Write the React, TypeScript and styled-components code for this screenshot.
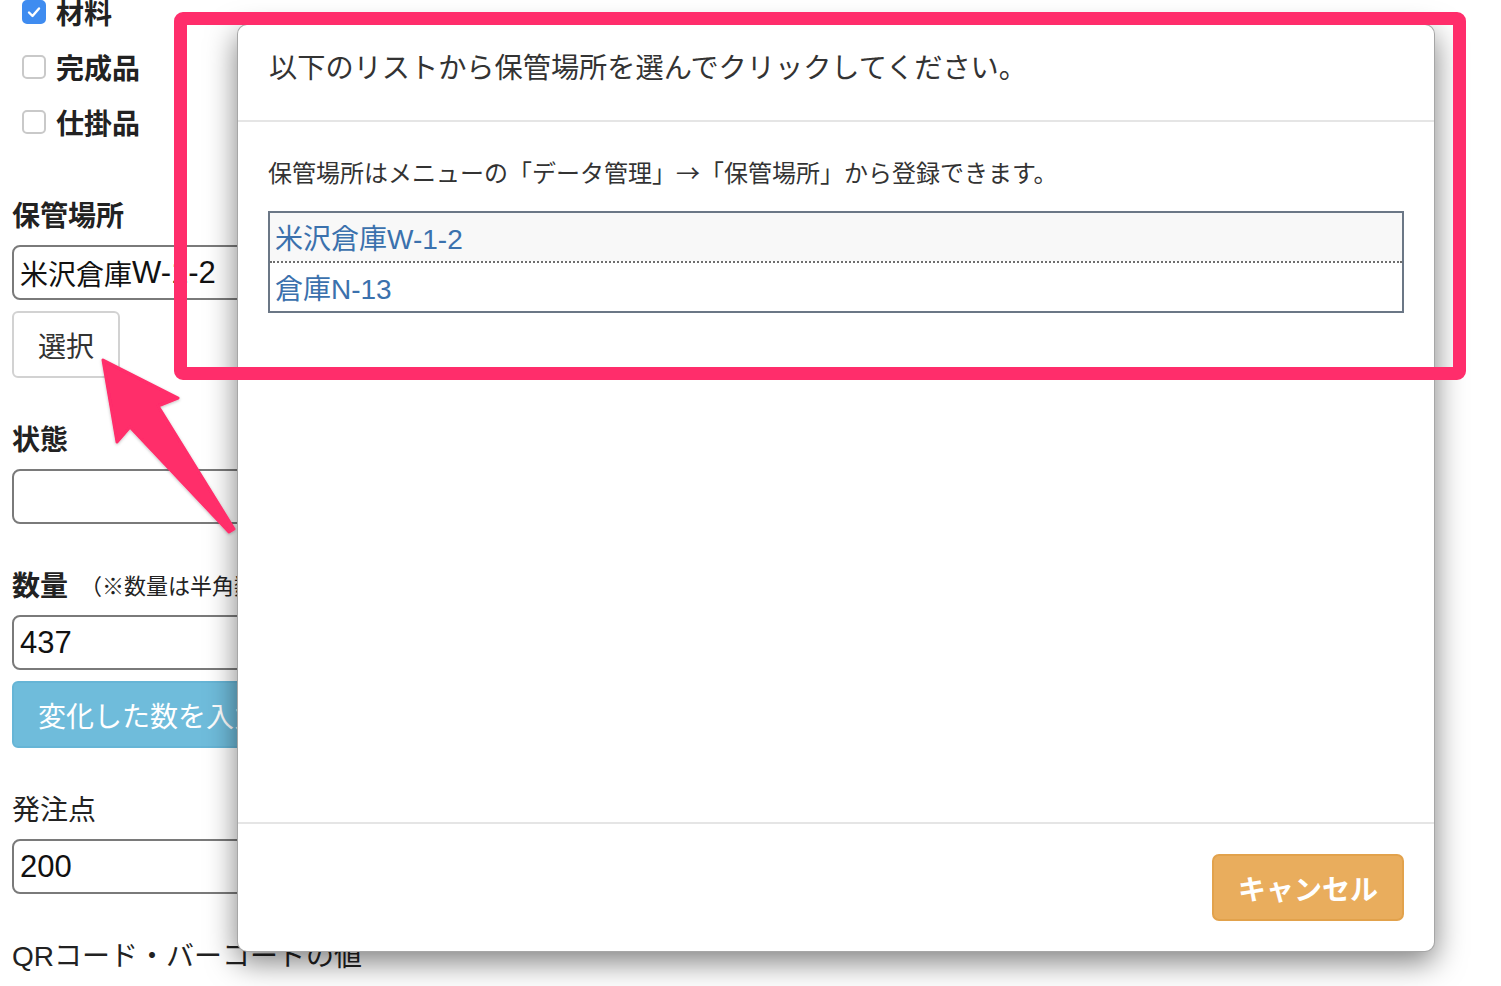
import React from "react";
import styled, { createGlobalStyle } from "styled-components";

const GlobalStyle = createGlobalStyle`
  html, body {
    margin: 0;
    padding: 0;
    background: #ffffff;
    overflow: hidden;
  }
  body {
    font-family: "Liberation Sans", "Noto Sans CJK JP", sans-serif;
    color: #222;
  }
  * { box-sizing: border-box; }
`;

const Page = styled.div`
  position: relative;
  width: 1501px;
  height: 986px;
  overflow: hidden;
`;

const Form = styled.div`
  display: flex;
  flex-direction: column;
  gap: 40px;
  width: 470px;
  margin-top: -16px;
  padding-left: 12px;
`;

const CheckList = styled.div`
  display: flex;
  flex-direction: column;
  margin-bottom: 5px;
`;

const CheckRow = styled.label`
  display: flex;
  align-items: center;
  height: 55px;
  gap: 10px;
  padding-left: 10px;
  font-size: 28px;
  font-weight: 700;
  color: #222;
`;

const Box = styled.span<{ $checked?: boolean }>`
  display: inline-flex;
  align-items: center;
  justify-content: center;
  width: 24px;
  height: 24px;
  border-radius: 5px;
  border: 2px solid ${(p) => (p.$checked ? "#3f8cf0" : "#c9c9c9")};
  background: ${(p) => (p.$checked ? "#3f8cf0" : "#ffffff")};
`;

const Field = styled.div`
  display: flex;
  flex-direction: column;
  align-items: flex-start;
  gap: 11px;
`;

const Label = styled.div<{ $light?: boolean }>`
  display: flex;
  align-items: center;
  height: 40px;
  font-size: 28px;
  font-weight: ${(p) => (p.$light ? 400 : 700)};
  color: #222;
  white-space: nowrap;
`;

const Note = styled.span`
  font-size: 22px;
  font-weight: 400;
  margin-left: 12px;
`;

const Input = styled.div`
  width: 100%;
  height: 55px;
  border: 2px solid #7a7a7a;
  border-radius: 8px;
  padding-left: 6px;
  display: flex;
  align-items: center;
  font-size: 28px;
  color: #111;
  white-space: nowrap;
`;

const Latin = styled.span`
  font-size: 31px;
`;

const DefaultButton = styled.div`
  height: 67px;
  padding: 0 24px;
  display: flex;
  align-items: center;
  border: 2px solid #d2d2d2;
  border-radius: 6px;
  background: #fff;
  font-size: 28px;
  color: #333;
`;

const InfoButton = styled.div`
  width: 100%;
  height: 67px;
  padding-left: 24px;
  display: flex;
  align-items: center;
  border-radius: 6px;
  background: #6fbcdb;
  border: 2px solid #66b5d6;
  font-size: 28px;
  color: #fff;
  white-space: nowrap;
`;

const Modal = styled.div`
  position: absolute;
  left: 237px;
  top: 24px;
  width: 1198px;
  height: 928px;
  display: flex;
  flex-direction: column;
  background: #fff;
  border: 1px solid rgba(0, 0, 0, 0.35);
  border-radius: 10px;
  box-shadow: 0 10px 30px rgba(0, 0, 0, 0.5);
`;

const ModalHeader = styled.div`
  height: 97px;
  padding: 23px 31px 0 31px;
  border-bottom: 2px solid #e5e5e5;
  font-size: 28.2px;
  line-height: 40px;
  color: #333;
  white-space: nowrap;
`;

const ModalBody = styled.div`
  flex: 1;
  padding: 33px 30px 0 30px;
  display: flex;
  flex-direction: column;
  gap: 22px;
`;

const Hint = styled.div`
  font-family: "Noto Sans CJK JP", "Liberation Sans", sans-serif;
  font-size: 24px;
  line-height: 34px;
  color: #333;
  white-space: nowrap;
`;

const List = styled.div`
  display: flex;
  flex-direction: column;
  border: 2px solid #6b7786;
`;

const ListItem = styled.div<{ $alt?: boolean; $sep?: boolean }>`
  height: ${(p) => (p.$sep ? 50 : 48)}px;
  display: flex;
  align-items: center;
  padding-left: 5px;
  background: ${(p) => (p.$alt ? "#f8f8f8" : "#fff")};
  border-top: ${(p) => (p.$sep ? "2px dotted #6e6e6e" : "none")};
  font-size: 28px;
  color: #3b71ad;
`;

const ModalFooter = styled.div`
  border-top: 2px solid #e5e5e5;
  padding: 30px;
  display: flex;
  justify-content: flex-end;
`;

const WarningButton = styled.div`
  height: 67px;
  padding: 0 24px;
  display: flex;
  align-items: center;
  border-radius: 7px;
  background: #e9ad5d;
  border: 2px solid #e2a24c;
  font-size: 28px;
  font-weight: 700;
  color: #fff;
`;

const Highlight = styled.div`
  position: absolute;
  left: 174px;
  top: 12px;
  width: 1292px;
  height: 368px;
  border: 13px solid #ff2d6b;
  border-radius: 9px;
  pointer-events: none;
`;

const ArrowLayer = styled.svg`
  position: absolute;
  left: 0;
  top: 0;
  pointer-events: none;
  overflow: visible;
`;

const Check = () => (
  <svg width="16" height="16" viewBox="0 0 16 16">
    <path d="M3 8.5 L6.5 12 L13 4.5" fill="none" stroke="#fff" strokeWidth="2.4" strokeLinecap="round" strokeLinejoin="round" />
  </svg>
);

export default function App() {
  return (
    <>
      <GlobalStyle />
      <Page>
        <Form>
          <CheckList>
            <CheckRow>
              <Box $checked>
                <Check />
              </Box>
              材料
            </CheckRow>
            <CheckRow>
              <Box />
              完成品
            </CheckRow>
            <CheckRow>
              <Box />
              仕掛品
            </CheckRow>
          </CheckList>

          <Field>
            <Label>保管場所</Label>
            <Input>
              米沢倉庫<Latin>W-1-2</Latin>
            </Input>
            <DefaultButton>選択</DefaultButton>
          </Field>

          <Field>
            <Label>状態</Label>
            <Input />
          </Field>

          <Field>
            <Label>
              数量<Note>（※数量は半角数字で入力してください）</Note>
            </Label>
            <Input>
              <Latin>437</Latin>
            </Input>
            <InfoButton>変化した数を入力する</InfoButton>
          </Field>

          <Field>
            <Label $light>発注点</Label>
            <Input>
              <Latin>200</Latin>
            </Input>
          </Field>

          <Field>
            <Label $light>QRコード・バーコードの値</Label>
          </Field>
        </Form>

        <Modal>
          <ModalHeader>以下のリストから保管場所を選んでクリックしてください。</ModalHeader>
          <ModalBody>
            <Hint>保管場所はメニューの「データ管理」→「保管場所」から登録できます。</Hint>
            <List>
              <ListItem $alt>米沢倉庫W-1-2</ListItem>
              <ListItem $sep>倉庫N-13</ListItem>
            </List>
          </ModalBody>
          <ModalFooter>
            <WarningButton>キャンセル</WarningButton>
          </ModalFooter>
        </Modal>

        <Highlight />

        <ArrowLayer width="1501" height="986" viewBox="0 0 1501 986">
          <defs>
            <filter id="arrowShadow" x="-20%" y="-20%" width="140%" height="140%">
              <feDropShadow dx="0" dy="1" stdDeviation="1.5" floodColor="#000" floodOpacity="0.25" />
            </filter>
          </defs>
          <polygon
            points="103,360 178,398 158,406 234,529 229,532 130,427 117,442"
            fill="#ff2d6b"
            stroke="#ff2d6b"
            strokeWidth="3"
            strokeLinejoin="round"
            filter="url(#arrowShadow)"
          />
        </ArrowLayer>
      </Page>
    </>
  );
}
